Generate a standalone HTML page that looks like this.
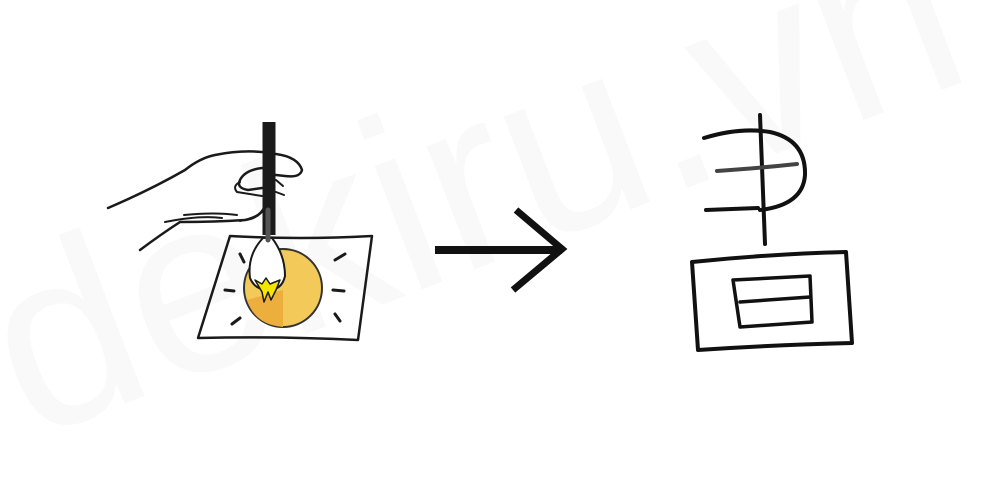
<!DOCTYPE html>
<html><head><meta charset="utf-8"><style>
html,body{margin:0;padding:0;background:#fff;}
svg{display:block}
</style></head><body>
<svg width="1000" height="500" viewBox="0 0 1000 500" xmlns="http://www.w3.org/2000/svg">
<rect width="1000" height="500" fill="#fff"/>
<text x="0" y="0" transform="translate(30,440) rotate(-21)" font-family="Liberation Sans, sans-serif" font-size="250" fill="#f9f9f9">dekiru.vn</text>
<g fill="none" stroke="#1a1a1a" stroke-linecap="round" stroke-linejoin="round">
<circle cx="283" cy="288" r="39" fill="#f3c95a" stroke="#333" stroke-width="2"/>
<path d="M247 300 Q255 325 283 327 L283 290 Z" fill="#ecae3c" stroke="none"/>
<path d="M230 236 Q300 240 372 236 L358 340 Q280 336 198 338 Z" stroke-width="2.5"/>
<path d="M240 254 L244 262 M225 290 L234 291 M232 324 L240 318 M335 260 L345 254 M333 290 L344 291 M335 314 L340 321" stroke-width="3"/>
<path d="M263 238 Q247 255 250 278 Q255 290 268 290 Q282 290 285 276 Q285 255 272 238 Z" fill="#fff" stroke-width="2"/>
<path d="M255 280 L262 284 L266 278 L270 284 L280 280 L276 290 L271 300 L268 292 L264 302 L262 292 Z" fill="#f5e400" stroke-width="1.5"/>
<path d="M269 122 L269 235" stroke-width="13" stroke-linecap="butt"/>
<path d="M268 210 L268 240" stroke="#555" stroke-width="5"/>
<path d="M108 208 Q150 190 185 170 Q200 158 215 155 Q240 150 262 152" stroke-width="2.5"/>
<path d="M276 154 Q298 157 302 170 Q300 178 285 176 L276 175" stroke-width="2.5"/>
<path d="M262 168 Q245 170 240 180 Q236 188 248 190 L262 188" stroke-width="2.5"/>
<path d="M240 182 Q232 186 237 192 L262 196" stroke-width="2"/>
<path d="M276 180 L283 186 M276 192 L284 195" stroke-width="2"/>
<path d="M140 250 Q160 235 180 222 Q215 222 245 220 Q260 218 265 206" stroke-width="2.5"/>
<path d="M165 222 Q200 215 222 218 M240 221 Q255 218 262 212" stroke-width="2"/>
<path d="M184 215 Q215 212 237 215" stroke-width="2"/>
<path d="M435 250 L562 250" stroke="#111" stroke-width="8" stroke-linecap="butt"/>
<path d="M516 210 L562 249 L513 290" stroke="#111" stroke-width="7" stroke-linecap="butt" stroke-linejoin="miter"/>
<g stroke="#111" stroke-width="4">
<path d="M760 115 L765 244"/>
<path d="M704 138 Q740 127 770 132 Q806 140 805 175 Q803 205 760 210"/>
<path d="M717 171 Q760 168 797 164" stroke="#444"/>
<path d="M706 210 L758 208"/>
<path d="M692 262 Q770 254 846 252 L852 343 Q770 345 698 350 Z"/>
<path d="M733 280 L810 276 L812 322 L740 327 Z" stroke-width="3.5"/>
<path d="M740 302 L810 297" stroke-width="3.5"/>
</g>
</g>
</svg>
</body></html>
